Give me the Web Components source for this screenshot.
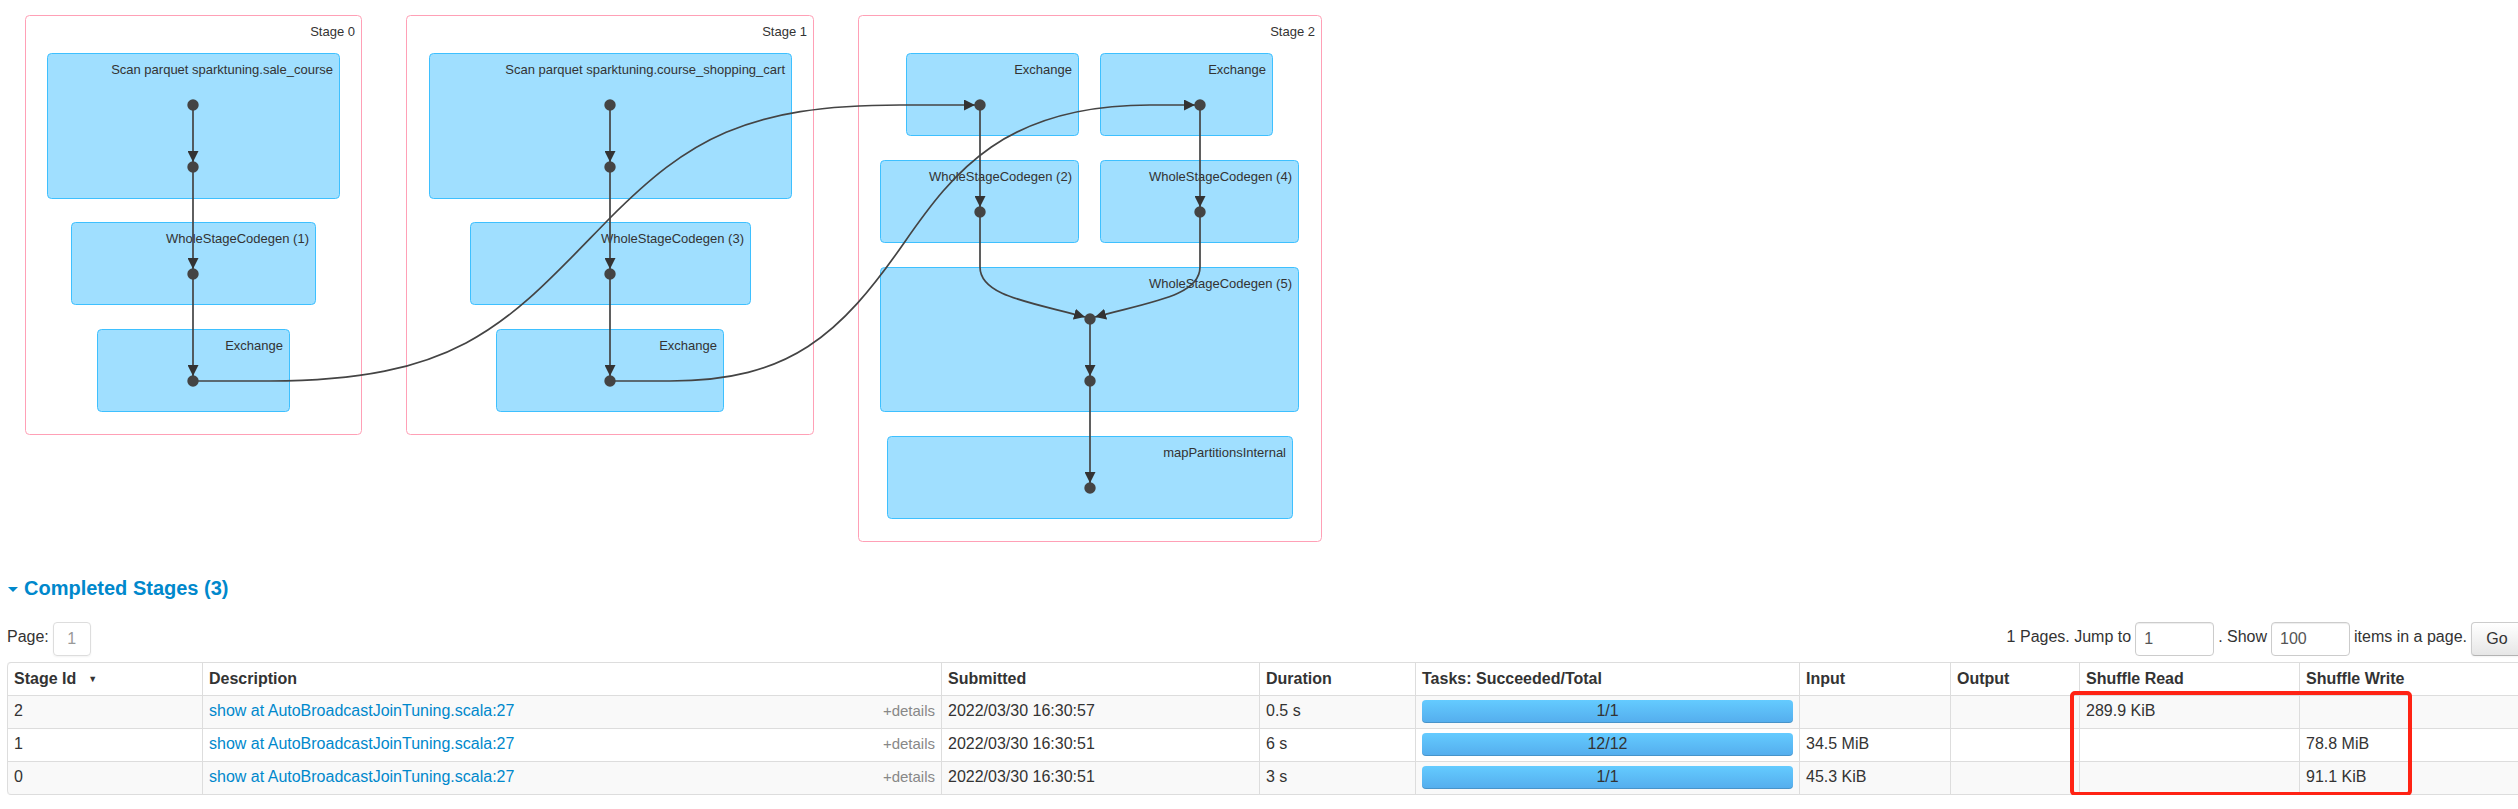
<!DOCTYPE html>
<html lang="en">
<head>
<meta charset="utf-8">
<title>Job details</title>
<style>
  body { margin: 0; overflow: hidden; background: #fff; color: #333; font: 16px/22px "Liberation Sans", Arial, sans-serif; }
</style>
</head>
<body>
<job-page></job-page>
<script>
const define = (name, html, setup) => {
  const template = document.createElement('template');
  template.innerHTML = html;
  customElements.define(name, class extends HTMLElement {
    connectedCallback() {
      if (this.shadowRoot) return;
      const root = this.attachShadow({ mode: 'open' });
      root.append(template.content.cloneNode(true));
      if (setup) setup(this, root);
    }
  });
};

const stages = [
  { label: 'Stage 0', box: [25, 15, 336, 419], steps: [
    { label: 'Scan parquet sparktuning.sale_course', box: [47, 53, 292, 145] },
    { label: 'WholeStageCodegen (1)', box: [71, 222, 244, 82] },
    { label: 'Exchange', box: [97, 329, 192, 82] } ] },
  { label: 'Stage 1', box: [406, 15, 407, 419], steps: [
    { label: 'Scan parquet sparktuning.course_shopping_cart', box: [429, 53, 362, 145] },
    { label: 'WholeStageCodegen (3)', box: [470, 222, 280, 82] },
    { label: 'Exchange', box: [496, 329, 227, 82] } ] },
  { label: 'Stage 2', box: [858, 15, 463, 526], steps: [
    { label: 'Exchange', box: [906, 53, 172, 82] },
    { label: 'Exchange', box: [1100, 53, 172, 82] },
    { label: 'WholeStageCodegen (2)', box: [880, 160, 198, 82] },
    { label: 'WholeStageCodegen (4)', box: [1100, 160, 198, 82] },
    { label: 'WholeStageCodegen (5)', box: [880, 267, 418, 144] },
    { label: 'mapPartitionsInternal', box: [887, 436, 405, 82] } ] }
];
const nodes = [
  [193, 105], [193, 167], [193, 274], [193, 381],
  [610, 105], [610, 167], [610, 274], [610, 381],
  [980, 105], [980, 212], [1200, 105], [1200, 212],
  [1090, 319], [1090, 381], [1090, 488]
];
const edges = [
  'M193 105V162', 'M193 167V269', 'M193 274V376',
  'M610 105V162', 'M610 167V269', 'M610 274V376',
  'M980 105V207', 'M1200 105V207', 'M1090 319V376', 'M1090 381V483',
  'M980 212V267C980 296 1030 302 1085 317',
  'M1200 212V267C1200 296 1150 302 1095 317',
  'M193 381H270C465 381 511 319 610 218C688 140 745 105 900 105H975',
  'M610 381H670C790 381 840 335 904 243C954 171 1005 105 1150 105H1195'
];

define('stage-graph', `
  <style>
    :host { display: block; }
    svg { display: block; }
    .stage { fill: #fff; stroke: #ffa0b6; }
    .step { fill: #a0dfff; stroke: #3ec0ff; }
    text { fill: #333; font-size: 13px; text-anchor: end; }
    circle { fill: #444; }
    .edge { fill: none; stroke: #444; stroke-width: 1.7; }
    marker { fill: #333; }
  </style>
  <svg width="1340" height="562" role="img" aria-label="DAG visualization">
    <defs><marker id="arrow" viewBox="0 0 10 10" refX="10" refY="5" markerUnits="userSpaceOnUse" markerWidth="11" markerHeight="11" orient="auto"><path d="M0 0L10 5L0 10z"/></marker></defs>
  </svg>`, (host, root) => {
  const svg = root.querySelector('svg');
  const box = (cls, { label, box: [x, y, w, h] }) =>
    `<rect class="${cls}" x="${x + .5}" y="${y + .5}" width="${w}" height="${h}" rx="4"/><text x="${x + w - 6}" y="${y + 21}">${label}</text>`;
  const group = document.createElementNS('http://www.w3.org/2000/svg', 'g');
  svg.append(group);
  group.innerHTML =
    stages.map(s => box('stage', s) + s.steps.map(t => box('step', t)).join('')).join('') +
    nodes.map(([x, y]) => `<circle cx="${x}" cy="${y}" r="5.7"/>`).join('') +
    edges.map(d => `<path class="edge" d="${d}" marker-end="url(#arrow)"/>`).join('');
});

define('section-title', `
  <style>
    :host { display: block; }
    h4 { margin: 0; font-size: 20px; line-height: 22px; }
    a { display: flex; align-items: center; gap: 6px; color: #08c; text-decoration: none; }
    i { border: 5px solid transparent; border-top-color: #08c; border-bottom: 0; margin: 2px 0 0 1px; }
  </style>
  <h4><a href="#completed"><i></i><slot></slot></a></h4>`);

define('page-nav', `
  <style>
    :host { display: flex; justify-content: space-between; align-items: flex-start; }
    form, nav { display: flex; align-items: flex-start; gap: 4px; line-height: 30px; }
    input, button, a { box-sizing: border-box; height: 34px; border: 1px solid #ccc; border-radius: 4px; font: inherit; color: #555; }
    a { width: 38px; text-align: center; line-height: 32px; border-color: #ddd; color: #999; text-decoration: none; box-shadow: 0 1px 2px rgba(0,0,0,.05); }
    input { width: 79px; padding: 0 8px; background: #fff; box-shadow: inset 0 1px 1px rgba(0,0,0,.075); }
    button { width: 52px; padding: 0; color: #333; background: linear-gradient(#fff, #e6e6e6); border-bottom-color: #b3b3b3; box-shadow: 0 1px 2px rgba(0,0,0,.05); }
  </style>
  <nav aria-label="Pages"><span>Page:</span><a href="#page1">1</a></nav>
  <form onsubmit="return false">
    <label for="jump">1 Pages. Jump to</label><input id="jump" type="text" value="1">
    <label for="size">. Show</label><input id="size" type="text" value="100">
    <span>items in a page.</span><button>Go</button>
  </form>`);

define('task-bar', `
  <style>
    :host { display: block; height: 23px; line-height: 21px; border-radius: 4px; text-align: center; background: linear-gradient(#64cbff, #54aded); box-shadow: inset 0 -1px 0 rgba(0,0,0,.15); }
  </style><slot></slot>`);

const rows = [
  [2, '2022/03/30 16:30:57', '0.5 s', '1/1', '', '', '289.9 KiB', ''],
  [1, '2022/03/30 16:30:51', '6 s', '12/12', '34.5 MiB', '', '', '78.8 MiB'],
  [0, '2022/03/30 16:30:51', '3 s', '1/1', '45.3 KiB', '', '', '91.1 KiB']
];

define('stage-table', `
  <style>
    :host { display: block; position: relative; }
    table { width: 100%; table-layout: fixed; border: 1px solid #ddd; border-left: 0; border-radius: 4px; border-spacing: 0; }
    th, td { box-sizing: border-box; padding: 4px 6px; border-left: 1px solid #ddd; text-align: left; vertical-align: top; height: 33px; line-height: 22px; }
    th { height: 32px; padding: 5px 6px 4px; }
    td { border-top: 1px solid #ddd; }
    tbody tr:nth-child(odd) td { background: #f9f9f9; }
    th:first-child { border-top-left-radius: 4px; }
    tr:last-child td:first-child { border-bottom-left-radius: 4px; }
    a { color: #08c; text-decoration: none; }
    .line { display: flex; justify-content: space-between; }
    .details { color: #888; font-size: 15px; }
    .sort { font-size: 9px; line-height: 9px; margin-left: 12px; vertical-align: 2px; }
    .w195 { width: 195px; } .w318 { width: 318px; } .w156 { width: 156px; } .w384 { width: 384px; }
    .w151 { width: 151px; } .w129 { width: 129px; } .w220 { width: 220px; } .w223 { width: 223px; }
    .highlight { position: absolute; top: 29px; right: 111px; width: 342px; height: 105px; box-sizing: border-box; border: 4px solid #ff2314; border-radius: 5px; pointer-events: none; }
  </style>
  <table>
    <thead><tr><th class="w195">Stage Id<span class="sort">▼</span></th><th>Description</th><th class="w318">Submitted</th><th class="w156">Duration</th><th class="w384">Tasks: Succeeded/Total</th><th class="w151">Input</th><th class="w129">Output</th><th class="w220">Shuffle Read</th><th class="w223">Shuffle Write</th></tr></thead>
    <tbody></tbody>
  </table>
  <div class="highlight"></div>`, (host, root) => {
  root.querySelector('tbody').innerHTML = rows.map(([id, submitted, duration, tasks, ...io]) =>
    `<tr><td>${id}</td><td><div class="line"><a href="#stage${id}">show at AutoBroadcastJoinTuning.scala:27</a><span class="details">+details</span></div></td><td>${submitted}</td><td>${duration}</td><td><task-bar>${tasks}</task-bar></td>${io.map(v => `<td>${v}</td>`).join('')}</tr>`).join('');
});

define('job-page', `
  <style>
    :host { display: block; margin-right: -5px; }
    main { padding-left: 7px; }
    stage-graph { margin-left: -7px; }
    section-title { margin-top: 15px; }
    page-nav { margin-top: 23px; }
    stage-table { margin-top: 6px; }
  </style>
  <main>
    <stage-graph></stage-graph>
    <section-title>Completed Stages (3)</section-title>
    <page-nav></page-nav>
    <stage-table></stage-table>
  </main>`);
</script>
</body>
</html>
